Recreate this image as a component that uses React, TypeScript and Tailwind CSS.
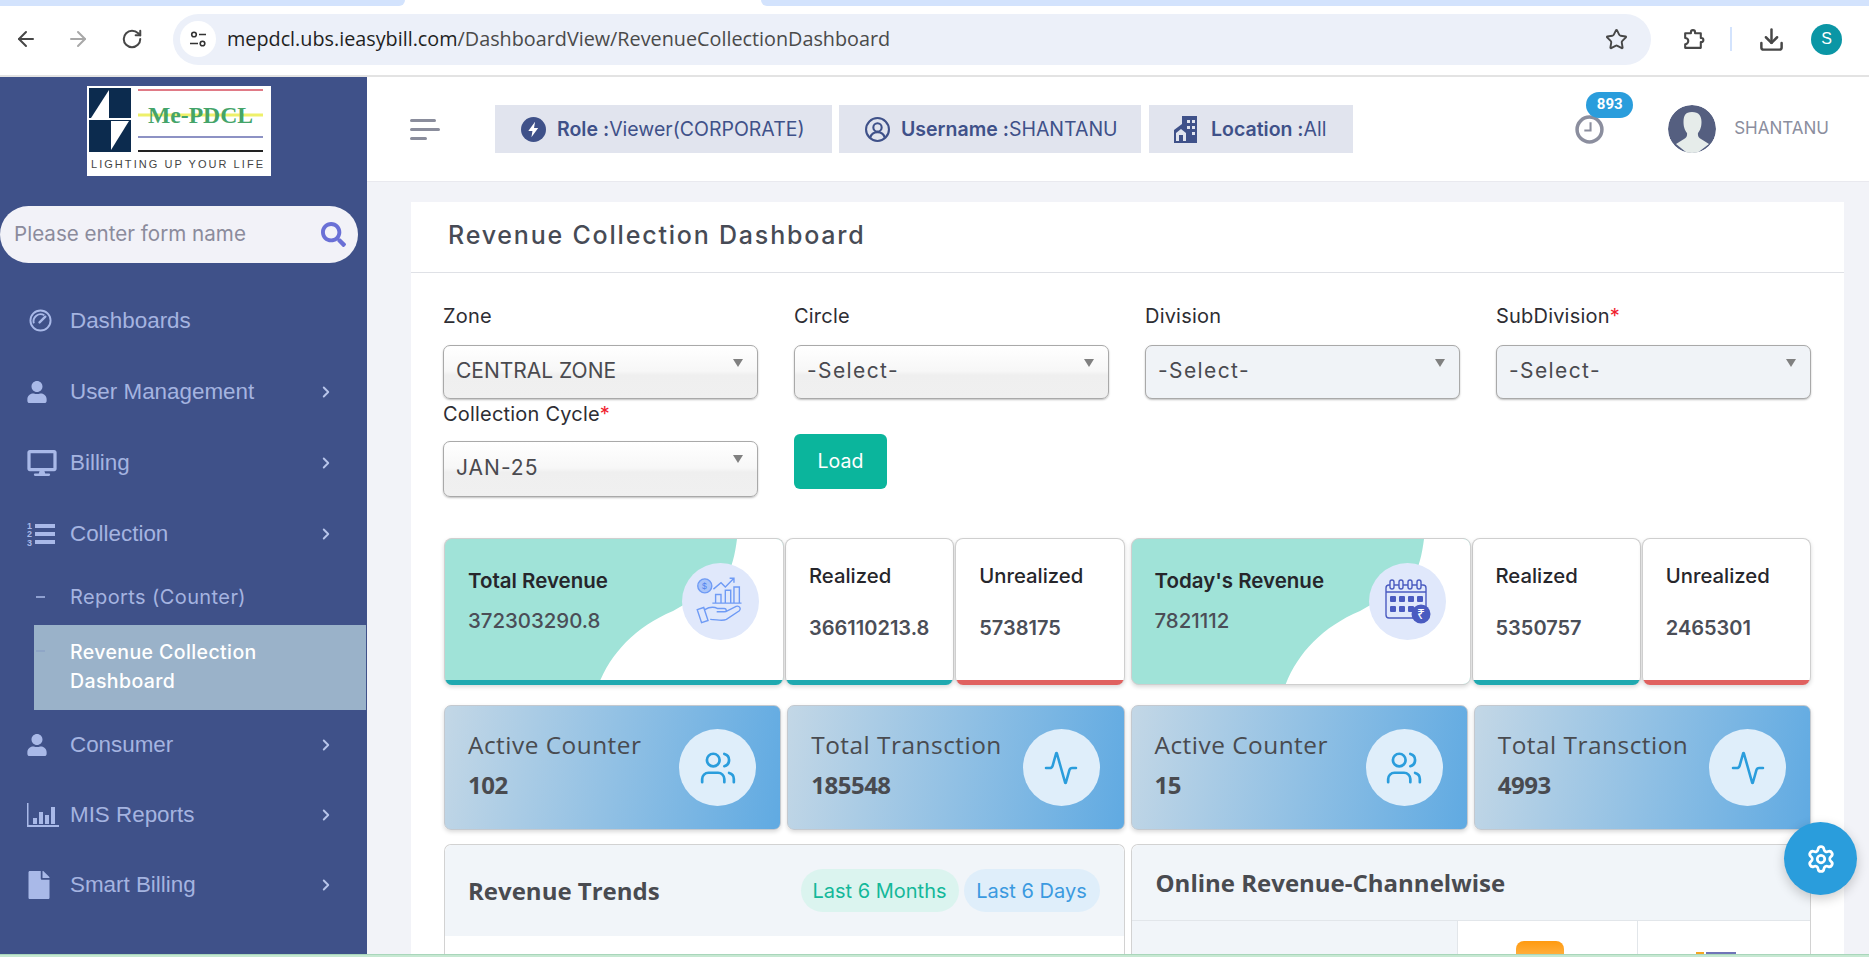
import { ArrowLeft, ArrowRight, RotateCw, Star, Download, Users, Activity, Settings, ChevronRight } from "lucide-react";
import { FaUser, FaDesktop, FaFile, FaSearch } from "react-icons/fa";
import clsx from "clsx";

const UI = "font-['Inter','Noto_Sans',sans-serif]";
const OPEN = "font-['Open_Sans','Noto_Sans',sans-serif]";

function GaugeIcon() {
  return (
    <svg viewBox="0 0 24 24" className="w-[23px] h-[23px] ml-[2px]" fill="none" stroke="currentColor">
      <circle cx="12" cy="12" r="10.500" strokeWidth="2" />
      <path d="M5 15a7.500 7.500 0 0 1 11-8.500" strokeWidth="2" />
      <path d="M11 14l6-6" strokeWidth="2.500" strokeLinecap="round" />
    </svg>
  );
}

function NumberedListIcon() {
  return (
    <svg viewBox="0 0 28 26" className="w-[28px] h-[26px]" fill="currentColor">
      <text x="0" y="8" fontSize="9" fontWeight="700" fontFamily="Liberation Sans, sans-serif">1</text>
      <text x="0" y="16" fontSize="9" fontWeight="700" fontFamily="Liberation Sans, sans-serif">2</text>
      <text x="0" y="25" fontSize="9" fontWeight="700" fontFamily="Liberation Sans, sans-serif">3</text>
      <rect x="8" y="3" width="20" height="4" />
      <rect x="8" y="11" width="20" height="4" />
      <rect x="8" y="19" width="20" height="4" />
    </svg>
  );
}

function BarsIcon() {
  return (
    <svg viewBox="0 0 32 24" className="w-[32px] h-[24px]" fill="currentColor">
      <path d="M0 0h1.500v22H32v2H0z" />
      <rect x="6" y="15" width="4" height="6" />
      <rect x="12" y="9" width="4" height="12" />
      <rect x="18" y="12" width="4" height="9" />
      <rect x="24" y="4" width="4" height="17" />
    </svg>
  );
}

const MENU_TOP = [
  { label: "Dashboards", icon: <GaugeIcon />, arrow: false },
  { label: "User Management", icon: <FaUser className="w-[20px] h-[22px]" />, arrow: true },
  { label: "Billing", icon: <FaDesktop className="w-[30px] h-[26px]" />, arrow: true },
  { label: "Collection", icon: <NumberedListIcon />, arrow: true },
];
const MENU_BOTTOM = [
  { label: "Consumer", icon: <FaUser className="w-[20px] h-[22px]" /> },
  { label: "MIS Reports", icon: <BarsIcon /> },
  { label: "Smart Billing", icon: <FaFile className="w-[24px] h-[28px]" /> },
];

function Logo() {
  return (
    <svg viewBox="0 0 184 90" className="w-[184px] h-[90px] bg-white">
      <rect x="2" y="2" width="42" height="64" fill="#0c2b4e" />
      <polygon points="22,4 4,32 22,32" fill="#fff" />
      <polygon points="24,35 42,35 24,64" fill="#fff" />
      <rect x="2" y="32" width="42" height="2" fill="#fff" />
      <line x1="51" y1="4" x2="176" y2="4" stroke="#e07a86" strokeWidth="2" />
      <line x1="51" y1="29" x2="176" y2="29" stroke="#eef06a" strokeWidth="3" />
      <text x="61" y="37" fontFamily="Liberation Serif, serif" fontWeight="700" fontSize="23" textLength="105" lengthAdjust="spacingAndGlyphs" fill="#44a469">Me-PDCL</text>
      <line x1="51" y1="51" x2="176" y2="51" stroke="#8d92c4" strokeWidth="2" />
      <line x1="51" y1="65" x2="176" y2="65" stroke="#222" strokeWidth="2" />
      <text x="4" y="82" fontFamily="Liberation Sans, sans-serif" fontSize="11" textLength="172" fill="#444">LIGHTING UP YOUR LIFE</text>
    </svg>
  );
}

function MenuRow({ label, icon, arrow = true, short }: { label: string; icon: React.ReactNode; arrow?: boolean; short?: boolean }) {
  return (
    <div className={clsx("flex items-center pl-[27px] pr-[32px]", short ? "h-[70px]" : "h-[71px]")}>
      <span className="w-[43px] flex items-center text-[#a9b9e8]">{icon}</span>
      <span className="flex-1 font-['Liberation_Sans',sans-serif] text-[22.4px] text-[#a5b4e0]">{label}</span>
      {arrow && <ChevronRight className="w-[18px] h-[18px] text-[#b8c5ea]" strokeWidth={2.5} />}
    </div>
  );
}

function Sidebar() {
  return (
    <aside className="w-[367px] shrink-0 bg-[#3f5189] flex flex-col">
      <div className="mt-[9px] ml-[87px]"><Logo /></div>
      <div className="mt-[30px] w-[358px] h-[57px] rounded-full bg-[#f2f2f8] flex items-center justify-between pl-[14px] pr-[12px]">
        <span className={clsx(UI, "text-[20.6px] text-[#8b8b9c]")}>Please enter form name</span>
        <FaSearch className="w-[25px] h-[25px] text-[#6a70d6]" />
      </div>
      <div className="mt-[22px]">
        {MENU_TOP.map(m => <MenuRow key={m.label} {...m} />)}
        <div className="h-[56px] flex items-center pl-[36px]">
          <span className="w-[9px] h-[2px] bg-[#8fa0d0]" />
          <span className={clsx(UI, "ml-[25px] text-[20px] tracking-[0.4px] text-[#a5b4e0]")}>Reports (Counter)</span>
        </div>
        <div className="ml-[34px] mr-[1px] h-[85px] bg-[#9ab2c9] flex pl-[2px] pt-[13px]">
          <span className="w-[9px] h-[2px] bg-[#8fa6c6] mt-[12px]" />
          <span className={clsx(UI, "ml-[25px] text-[19.5px] leading-[29px] font-medium tracking-[0.4px] text-white")}>Revenue Collection<br />Dashboard</span>
        </div>
        {MENU_BOTTOM.map(m => <MenuRow key={m.label} {...m} short />)}
      </div>
    </aside>
  );
}

function BrowserBar() {
  return (
    <>
      <div className="h-[6px] flex bg-white shrink-0">
        <div className="w-[405px] bg-[#d3e3fd] rounded-br-[8px]" />
        <div className="w-[356px]" />
        <div className="flex-1 bg-[#d3e3fd] rounded-bl-[8px]" />
      </div>
      <div className="h-[71px] shrink-0 bg-white border-b-2 border-[#e3e3e3] flex items-center pb-[3px]">
        <ArrowLeft className="ml-[14px] w-[24px] h-[24px] text-[#474747]" strokeWidth={2} />
        <ArrowRight className="ml-[28px] w-[24px] h-[24px] text-[#a8a8a8]" strokeWidth={2} />
        <RotateCw className="ml-[31px] w-[22px] h-[22px] text-[#474747]" strokeWidth={2.2} />
        <div className="ml-[30px] w-[1478px] h-[51px] rounded-full bg-[#ecf0f9] flex items-center pl-[7px] pr-[23px]">
          <span className="w-[36px] h-[36px] rounded-full bg-white flex items-center justify-center">
            <svg viewBox="0 0 20 20" className="w-[20px] h-[20px]" fill="none" stroke="#333" strokeWidth="1.6">
              <circle cx="6" cy="5.5" r="2.3" />
              <path d="M11 5.5h7M2 14.5h8" />
              <circle cx="14.5" cy="14.5" r="2.3" />
            </svg>
          </span>
          <span className={clsx(OPEN, "ml-[11px] flex-1 text-[19.8px] text-[#4a4a4a]")}>
            <span className="text-[#1f1f1f]">mepdcl.ubs.ieasybill.com</span>/DashboardView/RevenueCollectionDashboard
          </span>
          <Star className="w-[23px] h-[23px] text-[#474747]" strokeWidth={2} />
        </div>
        <svg viewBox="0 0 24 24" className="ml-[30px] w-[25px] h-[25px]" fill="none" stroke="#474747" strokeWidth="2" strokeLinejoin="round">
          <path d="M4 6h5.500V5a2 2 0 0 1 4 0v1H19v4.500h.5a2 2 0 0 1 0 4H19V20H4v-3.500a3 3 0 0 0 0-6V6z" />
        </svg>
        <span className="ml-[24px] w-[2px] h-[24px] bg-[#d3e3fd]" />
        <Download className="ml-[26px] w-[27px] h-[27px] text-[#474747]" strokeWidth={2.2} />
        <span className="ml-[26px] w-[31px] h-[31px] rounded-full bg-[#0b96a5] text-white text-[16px] flex items-center justify-center font-['Liberation_Sans',sans-serif]">S</span>
      </div>
    </>
  );
}

function Chip({ icon, name, value, className }: { icon: React.ReactNode; name: string; value: string; className: string }) {
  return (
    <div className={clsx("h-[48px] bg-[#e1e4ee] flex items-center text-[19.5px] text-[#3f5189]", UI, className)}>
      {icon}
      <span className="ml-[11px] mt-[2px] font-semibold">{name} :</span>
      <span className="mt-[2px] font-normal">{value}</span>
    </div>
  );
}

function TopBar() {
  return (
    <div className="h-[105px] shrink-0 bg-white border-b border-[#e9e9ef] flex items-center pl-[43px] pr-[40px]">
      <div className="w-[30px] flex flex-col gap-[6px] mr-[55px]">
        <span className="h-[3px] w-[26px] bg-[#8a8d9c] rounded" />
        <span className="h-[3px] w-[30px] bg-[#8a8d9c] rounded" />
        <span className="h-[3px] w-[17px] bg-[#8a8d9c] rounded" />
      </div>
      <Chip
        className="w-[337px] pl-[26px]"
        name="Role"
        value="Viewer(CORPORATE)"
        icon={
          <svg viewBox="0 0 24 24" className="w-[25px] h-[25px]">
            <circle cx="12" cy="12" r="12" fill="#3f5189" />
            <path d="M13.5 4.5 7 13.5h4l-1 6 6.5-9h-4z" fill="#fff" />
          </svg>
        }
      />
      <Chip
        className="w-[302px] ml-[7px] pl-[26px]"
        name="Username"
        value="SHANTANU"
        icon={
          <svg viewBox="0 0 24 24" className="w-[25px] h-[25px]" fill="none" stroke="#3f5189" strokeWidth="2">
            <circle cx="12" cy="12" r="11" />
            <circle cx="12" cy="10" r="4" />
            <path d="M5 20c1-4 4-5.500 7-5.500s6 1.500 7 5.500" />
          </svg>
        }
      />
      <Chip
        className="w-[204px] ml-[8px] pl-[25px]"
        name="Location"
        value="All"
        icon={
          <svg viewBox="0 0 24 28" className="w-[24px] h-[28px] mr-[2px]">
            <path d="M8 1h15v27H0V15l8-6z" fill="#3f5189" />
            <rect x="13" y="5" width="3" height="3" fill="#e1e4ee" />
            <rect x="18" y="5" width="3" height="3" fill="#e1e4ee" />
            <rect x="13" y="11" width="3" height="3" fill="#e1e4ee" />
            <rect x="18" y="11" width="3" height="3" fill="#e1e4ee" />
            <rect x="18" y="17" width="3" height="3" fill="#e1e4ee" />
            <path d="M2 18l5-4 5 4v8H2z" fill="#e1e4ee" />
            <rect x="5" y="20" width="4" height="6" fill="#3f5189" />
          </svg>
        }
      />
      <div className="ml-auto relative w-[29px] h-[29px] mr-[64px]">
        <svg viewBox="0 0 28 28" className="w-full h-full" fill="none" stroke="#8b8e9e" strokeWidth="3.4">
          <circle cx="14" cy="14" r="12" />
          <path d="M15 7v8H9" strokeWidth="2" />
        </svg>
        <span className="absolute -top-[23px] left-[11px] w-[47px] h-[26px] rounded-full bg-[#2a9ddc] text-white text-[15px] font-bold flex items-center justify-center font-['Roboto',sans-serif]">893</span>
      </div>
      <svg viewBox="0 0 48 48" className="w-[48px] h-[48px] rounded-full">
        <circle cx="24" cy="24" r="24" fill="#555f80" />
        <path d="M24 7c7 0 9.500 4 9.500 10s-2 9-3.500 11c-.5 3 1 5 3 6l8 5L24 52 8 39l8-5c2-1 3.500-3 3-6-1.500-2-3.500-5-3.500-11S17 7 24 7z" fill="#e6ecea" />
      </svg>
      <span className={clsx(UI, "ml-[18px] text-[17px] text-[#8b8e9e]")}>SHANTANU</span>
    </div>
  );
}

function Field({ label, value, required, disabled, labelClass = "mb-[16px]", selectClass = "h-[54px]", valueClass = "tracking-[1.4px]" }: { label: string; value: string; required?: boolean; disabled?: boolean; labelClass?: string; selectClass?: string; valueClass?: string }) {
  return (
    <div>
      <div className={clsx(UI, "h-[26px] leading-[26px] text-[20px] tracking-[0.2px] text-[#2d2d33]", labelClass)}>
        {label}{required && <span className="text-[#f0202e]">*</span>}
      </div>
      <div className={clsx(
        "relative rounded-[7px] border border-[#a9a9a9] shadow-[0_1px_2px_rgba(0,0,0,0.25)] flex items-center pl-[12px] pb-[2px]",
        selectClass,
        disabled ? "bg-[#f0f3f7]" : "bg-[linear-gradient(#ffffff,#f7f7f7_48%,#efefef_56%,#f0f0f0)]"
      )}>
        <span className={clsx(UI, "text-[21px] text-[#4a4a4f]", valueClass)}>{value}</span>
        <span className="absolute right-[14px] top-[13px] w-0 h-0 border-x-[5px] border-x-transparent border-t-[8px] border-t-[#808080]" />
      </div>
    </div>
  );
}

function RevenueCard({ title, value, icon, bar }: { title: string; value: string; icon: React.ReactNode; bar?: boolean }) {
  return (
    <div className={clsx("relative w-[340px] h-[147px] rounded-[8px] overflow-hidden bg-[#a0e3d8] border border-[#cfcfcf] shadow-[0_2px_4px_rgba(0,0,0,0.15)] flex flex-col", bar ? "border-b-0" : "pb-[4px]")}>
      <svg viewBox="0 0 340 147" className="absolute inset-0 w-[340px] h-[147px]">
        <path d="M292 0C290 16 287 28 280 42L228 72C190 88 165 115 153 147H340V0Z" fill="#fff" />
      </svg>
      <div className="relative flex-1 flex items-center pl-[23px] pr-[24px]">
        <div className="flex-1 -mt-[17px]">
          <div className={clsx(UI, "text-[20.5px] font-semibold text-[#26262b]")}>{title}</div>
          <div className={clsx(UI, "mt-[9px] text-[20.4px] font-medium text-[#4b4e57]")}>{value}</div>
        </div>
        <span className="w-[77px] h-[77px] rounded-full bg-[#e0e8fb] flex items-center justify-center -mt-[17px]">{icon}</span>
      </div>
      {bar && <div className="relative h-[5px] bg-[#1fa9b0]" />}
    </div>
  );
}

function MiniCard({ title, value, bar }: { title: string; value: string; bar: string }) {
  return (
    <div className="flex-1 h-[147px] rounded-[8px] overflow-hidden bg-white border border-[#cfcfcf] border-b-0 shadow-[0_2px_4px_rgba(0,0,0,0.15)] flex flex-col">
      <div className="flex-1 pl-[23px] pt-[23px]">
        <div className={clsx(UI, "text-[20.3px] leading-[28px] font-medium text-[#26262b]")}>{title}</div>
        <div className={clsx(UI, "mt-[24px] text-[20px] leading-[28px] font-semibold text-[#4b4e57]")}>{value}</div>
      </div>
      <div className={clsx("h-[5px]", bar)} />
    </div>
  );
}

function CounterCard({ title, value, icon }: { title: string; value: string; icon: React.ReactNode }) {
  return (
    <div className="h-[125px] rounded-[7px] border border-[#c4c9cf] bg-[linear-gradient(100deg,#c3d7e6,#60aae2)] shadow-[0_2px_4px_rgba(0,0,0,0.15)] flex items-center pl-[23px] pr-[24px]">
      <div className={clsx(OPEN, "flex-1 -mt-[5px] text-[#494b50]")}>
        <div className="text-[24.4px] tracking-[0.5px] leading-[30px]">{title}</div>
        <div className="text-[24px] font-bold tracking-[-0.5px] leading-[30px] mt-[10px]">{value}</div>
      </div>
      <span className="w-[77px] h-[77px] rounded-full bg-[#dfeefa] flex items-center justify-center text-[#2a9ddc]">{icon}</span>
    </div>
  );
}

function HandChartIcon() {
  return (
    <svg viewBox="0 0 50 50" className="w-[54px] h-[54px]" fill="none" stroke="#6f9bf5" strokeWidth="1.3">
      <circle cx="10" cy="11" r="6.500" fill="#a9c4f8" />
      <text x="7.300" y="14" fontSize="8" fontFamily="Liberation Sans, sans-serif" stroke="none" fill="#4f82ee">$</text>
      <path d="M18 14l7-6 4 4 8-8m-4 0h4v4" />
      <path d="M20 27v-8h5v8M29 27V15h5v12M37 27V12h5v15M17 27h27" />
      <path d="M3 33l6-2 4 12-6 2zM10 33c5-3 8-3 12-1h6c2 0 3 3 0 3h-7m8 0 10-5c3-1 5 2 3 4l-12 8c-4 2-9 0-15 0" />
    </svg>
  );
}

function CalendarIcon() {
  return (
    <svg viewBox="0 0 50 50" className="w-[50px] h-[50px]" fill="none" stroke="#4a5bc0" strokeWidth="1.4">
      <rect x="4" y="9" width="40" height="33" rx="3" />
      <path d="M4 16h40" />
      {[10, 19, 28, 37].map(x => <rect key={x} x={x - 2} y="4" width="4" height="9" rx="2" fill="#e0e8fb" />)}
      {[8, 17, 26, 35].map(x => <rect key={x} x={x} y="20" width="6" height="6" rx="1" fill="#4a5bc0" stroke="none" />)}
      {[8, 17, 26, 35].map(x => <rect key={x} x={x} y="30" width="6" height="6" rx="1" fill="#4a5bc0" stroke="none" />)}
      <circle cx="39" cy="38" r="9.500" fill="#4a5bc0" stroke="none" />
      <text x="35" y="43" fontSize="14" fontFamily="Noto Sans, DejaVu Sans, sans-serif" stroke="none" fill="#fff">₹</text>
    </svg>
  );
}

export default function App() {
  return (
    <div className="relative h-screen w-full overflow-hidden flex flex-col bg-white">
      <BrowserBar />
      <div className="flex-1 min-h-0 flex">
        <Sidebar />
        <main className="flex-1 min-w-0 bg-[#f2f3f8] flex flex-col">
          <TopBar />
          <div className="mt-[20px] ml-[44px] mr-[25px] bg-white flex-1 min-h-0 overflow-hidden">
            <div className="h-[71px] border-b border-[#dfe1e6] flex items-center pl-[37px] pb-[2px]">
              <h1 className={clsx(UI, "text-[25px] font-medium tracking-[1.8px] text-[#474b55]")}>Revenue Collection Dashboard</h1>
            </div>
            <div className="pl-[32px] pr-[33px] pt-[30px]">
              <div className="grid grid-cols-4 gap-x-[36px] gap-y-[2px]">
                <Field label="Zone" value="CENTRAL ZONE" valueClass="" />
                <Field label="Circle" value="-Select-" />
                <Field label="Division" value="-Select-" disabled />
                <Field label="SubDivision" value="-Select-" required disabled />
                <Field label="Collection Cycle" value="JAN-25" required labelClass="mb-[14px]" selectClass="h-[56px]" valueClass="tracking-[1px]" />
                <div>
                  <button className={clsx(UI, "mt-[33px] w-[93px] h-[55px] rounded-[6px] bg-[#0bb59c] text-white text-[19.5px]")}>Load</button>
                </div>
              </div>
              <div className="ml-[1px] mt-[41px] grid grid-cols-2 gap-x-[6px]">
                <div className="flex gap-[1px]">
                  <RevenueCard title="Total Revenue" value="372303290.8" icon={<HandChartIcon />} bar />
                  <MiniCard title="Realized" value="366110213.8" bar="bg-[#1fa9b0]" />
                  <MiniCard title="Unrealized" value="5738175" bar="bg-[#e0615f]" />
                </div>
                <div className="flex gap-[1px]">
                  <RevenueCard title="Today's Revenue" value="7821112" icon={<CalendarIcon />} />
                  <MiniCard title="Realized" value="5350757" bar="bg-[#1fa9b0]" />
                  <MiniCard title="Unrealized" value="2465301" bar="bg-[#e0615f]" />
                </div>
              </div>
              <div className="ml-[1px] mt-[20px] grid grid-cols-4 gap-x-[6px]">
                <CounterCard title="Active Counter" value="102" icon={<Users className="w-[38px] h-[38px]" strokeWidth={1.7} />} />
                <CounterCard title="Total Transction" value="185548" icon={<Activity className="w-[36px] h-[36px]" strokeWidth={1.7} />} />
                <CounterCard title="Active Counter" value="15" icon={<Users className="w-[38px] h-[38px]" strokeWidth={1.7} />} />
                <CounterCard title="Total Transction" value="4993" icon={<Activity className="w-[36px] h-[36px]" strokeWidth={1.7} />} />
              </div>
              <div className="ml-[1px] mt-[14px] grid grid-cols-2 gap-x-[6px]">
                <section className="h-[200px] rounded-t-[7px] border border-[#d2d2d2] border-b-0">
                  <div className="h-[91px] bg-[#f1f5f9] rounded-t-[7px] flex items-center pl-[23px] pr-[24px]">
                    <h2 className={clsx(OPEN, "flex-1 text-[24px] font-bold text-[#494b50]")}>Revenue Trends</h2>
                    <span className={clsx(UI, "h-[43px] w-[158px] rounded-full bg-[#dbf4ef] text-[#14b89a] text-[20px] flex items-center justify-center")}>Last 6 Months</span>
                    <span className={clsx(UI, "ml-[5px] h-[43px] w-[136px] rounded-full bg-[#dfeefa] text-[#3b9ae0] text-[20px] flex items-center justify-center")}>Last 6 Days</span>
                  </div>
                </section>
                <section className="h-[200px] rounded-t-[7px] border border-[#d2d2d2] border-b-0">
                  <div className="h-[76px] bg-[#f1f5f9] rounded-t-[7px] border-b border-[#e2e6ea] flex items-center pl-[24px]">
                    <h2 className={clsx(OPEN, "text-[24px] font-bold text-[#494b50]")}>Online Revenue-Channelwise</h2>
                  </div>
                  <div className="flex h-[100px]">
                    <div className="w-[325px] bg-[#f1f5f9]" />
                    <div className="w-[180px] border-l border-[#e2e6ea] pl-[58px] pt-[20px]">
                      <span className="block w-[48px] h-[48px] rounded-[8px] bg-[linear-gradient(#ff9a10,#ffb347_35%,#fff5e0)]" />
                    </div>
                    <div className="flex-1 border-l border-[#e2e6ea] pl-[58px] pt-[31px] flex gap-[2px] items-start">
                      <span className="w-[8px] h-[4px] bg-[#f5a623]" />
                      <span className="w-[30px] h-[4px] bg-[#7075b8]" />
                    </div>
                  </div>
                </section>
              </div>
            </div>
          </div>
        </main>
      </div>
      <div className="h-[3px] shrink-0 bg-[#c6e8d2] border-t border-[#a9d6bb]" />
      <button className="absolute left-[1784px] top-[822px] w-[73px] h-[73px] rounded-full bg-[#2a9ddc] shadow-[0_4px_12px_rgba(0,0,0,0.2)] flex items-center justify-center text-white">
        <Settings className="w-[30px] h-[30px]" strokeWidth={2.2} />
      </button>
    </div>
  );
}
